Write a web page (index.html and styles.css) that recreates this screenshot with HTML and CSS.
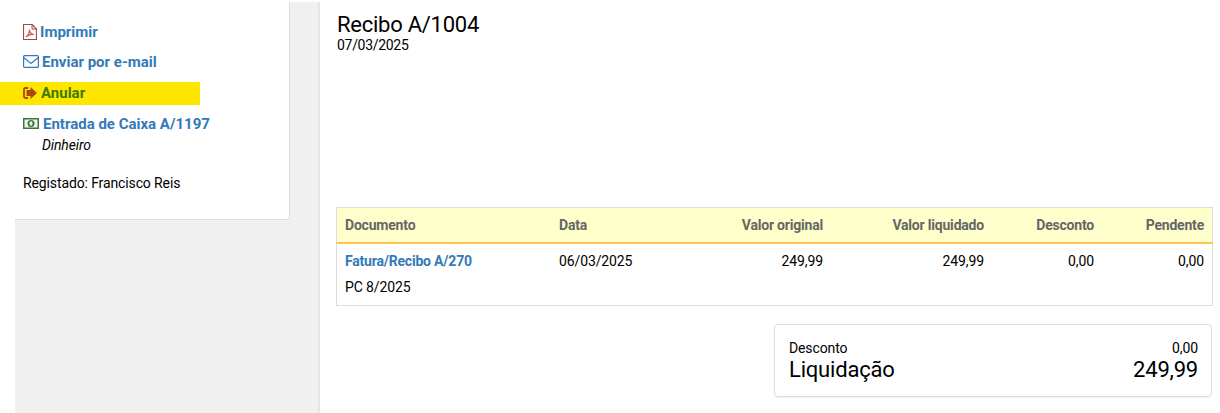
FILE: index.html
```html
<!DOCTYPE html>
<html lang="pt">
<head>
    <meta charset="UTF-8">
    <title>Recibo A/1004</title>
    <link rel="stylesheet" href="styles.css">
</head>
<body>
    <div class="page">
        <aside class="sidebar">
            <div class="side-card">
                <a href="#" class="side-link">
                    <svg class="icon" width="14" height="16" viewBox="0 0 14 16">
                        <path d="M.5 .5H9L13.5 5V15.500H.5Z" fill="#fff" stroke="#a94442" stroke-width="1.200"/>
                        <path d="M9 .5V5H13.500" fill="none" stroke="#a94442"/>
                        <path d="M3 13C5 11.500 6.500 8 6.500 5.500C6.500 8 8 10 11 10.500C8.500 10 5 11 3 13Z" fill="none" stroke="#c25a55" stroke-width="1.200"/>
                    </svg>
                    Imprimir
                </a>
                <a href="#" class="side-link">
                    <svg class="icon" width="16" height="13" viewBox="0 0 16 13">
                        <rect x=".6" y=".6" width="14.800" height="11.800" rx="1" fill="none" stroke="#337ab7" stroke-width="1.200"/>
                        <path d="M.6 2.500L8 8.500L15.400 2.500" fill="none" stroke="#337ab7" stroke-width="1.200"/>
                    </svg>
                    Enviar por e-mail
                </a>
                <a href="#" class="side-link side-link-mark">
                    <svg class="icon" width="14" height="12" viewBox="0 0 14 12">
                        <path d="M5 1H2.500Q1 1 1 2.500V9.500Q1 11 2.500 11H5" fill="none" stroke="#a94a0c" stroke-width="1.800"/>
                        <path d="M7.500 0L14 6L7.500 12V9H3.500V3H7.500Z" fill="#a94a0c"/>
                    </svg>
                    Anular
                </a>
                <a href="#" class="side-link side-link-wide">
                    <svg class="icon" width="16" height="11" viewBox="0 0 16 11">
                        <rect width="16" height="11" fill="#3c763d"/>
                        <rect x="1.500" y="1.500" width="13" height="8" fill="#eef5ea"/>
                        <circle cx="8" cy="5.500" r="3.500" fill="#3c763d"/>
                        <ellipse cx="8" cy="5.500" rx="1.500" ry="2.200" fill="#eef5ea"/>
                    </svg>
                    Entrada de Caixa A/1197
                </a>
                <div class="side-note">Dinheiro</div>
                <p class="side-user">Registado: Francisco Reis</p>
            </div>
        </aside>

        <main class="content">
            <h1>Recibo A/1004</h1>
            <div class="doc-date">07/03/2025</div>

            <table class="doc-table">
                <thead>
                    <tr>
                        <th class="col-doc">Documento</th>
                        <th class="col-date">Data</th>
                        <th class="num col-orig">Valor original</th>
                        <th class="num col-liq">Valor liquidado</th>
                        <th class="num col-small">Desconto</th>
                        <th class="num col-small">Pendente</th>
                    </tr>
                </thead>
                <tbody>
                    <tr>
                        <td><a href="#">Fatura/Recibo A/270</a><div class="doc-ref">PC 8/2025</div></td>
                        <td>06/03/2025</td>
                        <td class="num">249,99</td>
                        <td class="num">249,99</td>
                        <td class="num">0,00</td>
                        <td class="num">0,00</td>
                    </tr>
                </tbody>
            </table>

            <div class="totals">
                <div class="totals-row"><span>Desconto</span><span>0,00</span></div>
                <div class="totals-row totals-main"><span>Liquidação</span><span>249,99</span></div>
            </div>
        </main>
    </div>
</body>
</html>
```

FILE: styles.css
```css
body {
    font-family: Roboto, 'Liberation Sans', sans-serif;
    font-size: 14px;
    letter-spacing: -0.12px;
    margin: 0;
    padding: 0;
    background-color: #fff;
    color: #000;
}

a {
    color: #337ab7;
    text-decoration: none;
}

.page {
    display: flex;
    height: 413px;
    overflow: hidden;
}

/* coluna da esquerda */
.sidebar {
    width: 303px;
    margin: 2px 0 0 15px;
    background-color: #f0f0f0;
    border-right: 2px solid #e6e6e6;
    flex-shrink: 0;
}

.side-card {
    width: 275px;
    height: 218px;
    box-sizing: border-box;
    padding-top: 18px;
    background-color: #fff;
    border-right: 1px solid #ddd;
    border-bottom: 1px solid #ddd;
    border-bottom-right-radius: 3px;
}

.side-link {
    display: flex;
    align-items: center;
    gap: 3px;
    width: 200px;
    height: 23px;
    margin: 0 0 7px -15px;
    box-sizing: border-box;
    padding-left: 23px;
    font-size: 15px;
    font-weight: 700;
    letter-spacing: 0;
    white-space: nowrap;
}

.side-link-mark {
    margin-top: 9px;
    padding-bottom: 2px;
    gap: 4px;
    background-color: #ffe600;
    color: #3c7a00;
}

.side-link-wide {
    gap: 4px;
}

.icon {
    flex-shrink: 0;
}

.side-note {
    margin: -5px 0 0 27px;
    font-style: italic;
}

.side-user {
    margin: 22px 0 0 8px;
}

/* conteudo */
.content {
    flex: 1;
    min-width: 0;
    padding: 13px 8px 0 16px;
}

h1 {
    font-size: 22px;
    font-weight: 400;
    line-height: 24px;
    letter-spacing: -0.25px;
    margin: 0 0 0 1px;
}

.doc-date {
    line-height: 16px;
    letter-spacing: -0.3px;
    margin: 0 0 154px 1px;
}

.doc-table {
    width: 875px;
    table-layout: fixed;
    border-collapse: collapse;
    border: 1px solid #ddd;
}

.doc-table th {
    height: 34px;
    padding: 0 8px;
    text-align: left;
    font-weight: 700;
    letter-spacing: -0.2px;
    color: #666;
    background-color: #ffc;
    border-bottom: 2px solid #fdc35a;
}

.doc-table td {
    padding: 7px 8px 0;
    height: 54px;
    vertical-align: top;
    line-height: 20px;
}

.doc-table td a {
    font-weight: 700;
    letter-spacing: -0.2px;
}

.doc-ref {
    margin-top: 6px;
}

.doc-table .num {
    text-align: right;
}

.col-doc {
    width: 198px;
}

.col-date {
    width: 124px;
}

.col-orig {
    width: 124px;
}

.col-liq {
    width: 145px;
}

.col-small {
    width: 94px;
}

.totals {
    width: 409px;
    margin: 18px 0 0 auto;
    padding: 15px 13px 13px 14px;
    border: 1px solid #ddd;
    border-radius: 4px;
    box-shadow: 0 1px 1px rgba(0, 0, 0, 0.05);
}

.totals-row {
    display: flex;
    justify-content: space-between;
    line-height: 17px;
}

.totals-main {
    font-size: 22px;
    line-height: 26px;
    letter-spacing: -0.2px;
}
```
